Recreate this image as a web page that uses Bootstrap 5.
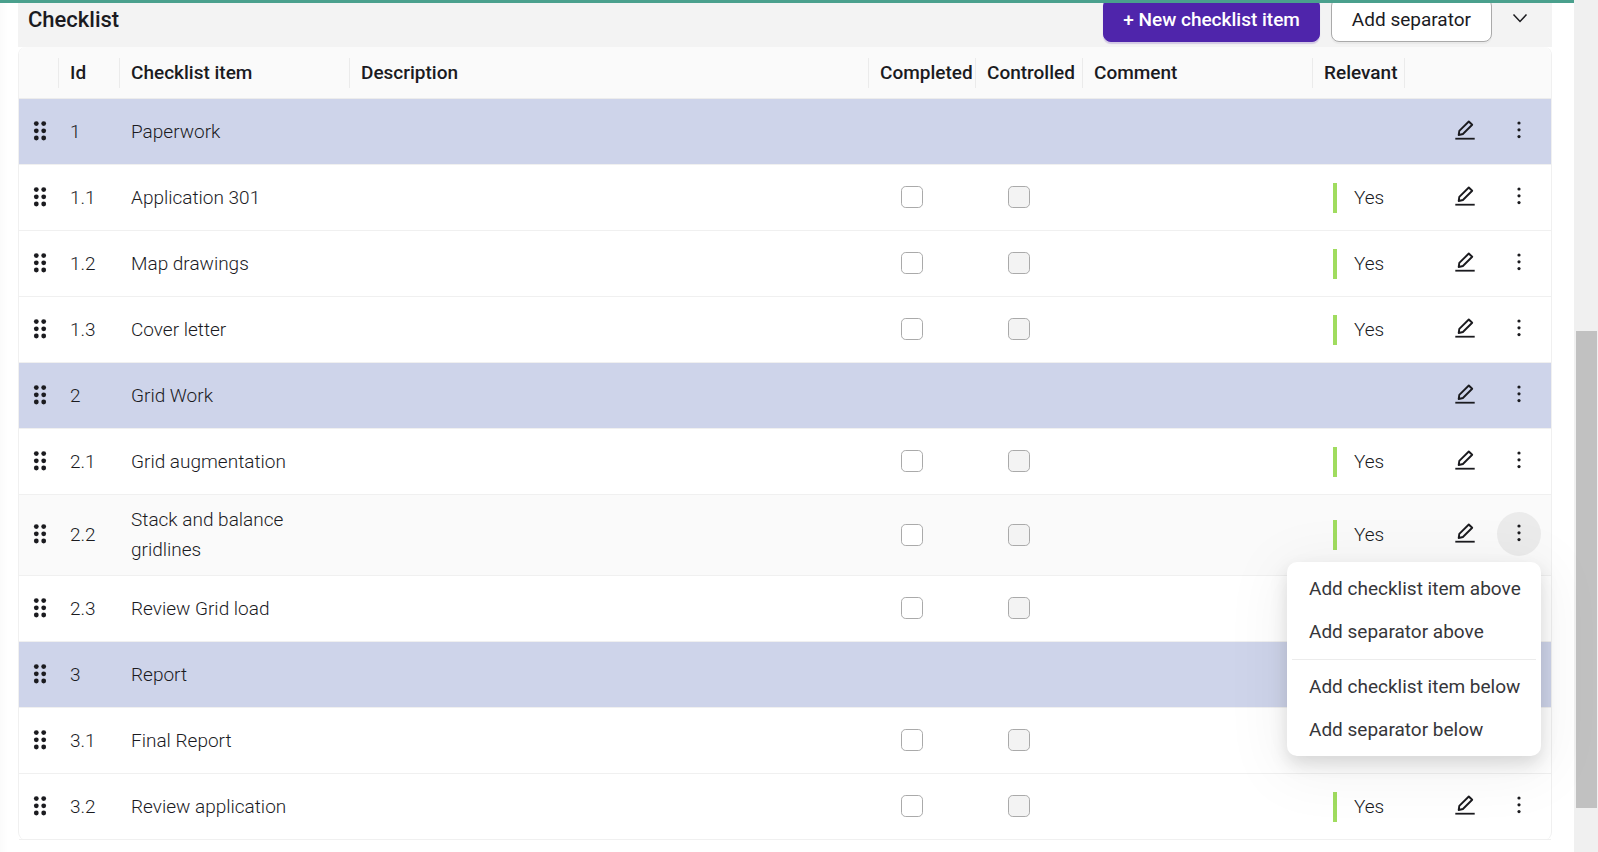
<!DOCTYPE html>
<html lang="en">
<head>
<meta charset="utf-8">
<meta name="viewport" content="width=device-width, initial-scale=1">
<title>Checklist</title>
<link rel="stylesheet" href="https://cdn.jsdelivr.net/npm/bootstrap@5.3.0/dist/css/bootstrap.min.css">
<style>
  body { font-family: Roboto, "Liberation Sans", sans-serif; font-size: 19px; line-height: 30px; color: #1b1b1f; background: #fff; }
  .top-line { height: 3px; background: #4aa08d; margin-right: 24px; }
  .page-main { padding: 0 22px 0 18px; background: linear-gradient(90deg, #fbfbfb, #fff 8px); }
  .panel-head { height: 47px; padding: 0 16px 7px 10px; gap: 11px; background: #f3f3f3; }
  .panel-head h2 { font-size: 22px; line-height: 30px; font-weight: 500; }
  .head-btn { height: 44px; padding: 0 20px; font-size: 19px; line-height: 30px; border-radius: 8px; white-space: nowrap; flex-shrink: 0; }
  .head-new { padding: 0 19px; background: #4f25ab; border-color: #4f25ab; color: #fff; font-weight: 500; box-shadow: 0 2px 1px #4f25ab33; }
  .head-new:hover { background: #43209a; color: #fff; }
  .head-sep { background: #fff; border-color: #aaa; color: #1b1b1f; box-shadow: 0 2px 1px #0000000a; }
  .head-fold { width: 33px; height: 44px; }
  .list-table { table-layout: fixed; border-collapse: separate; border-spacing: 0; border: solid #f0f0f0; border-width: 0 1px; border-radius: 8px; color: inherit; }
  .list-table th { height: 52px; padding: 0; background: #fafafa; border-bottom: 1px solid #ececec; font-weight: 500; vertical-align: middle; white-space: nowrap; }
  .list-table th:first-child { border-top-left-radius: 8px; }
  .list-table th:last-child { border-top-right-radius: 8px; }
  .th-label { height: 30px; line-height: 30px; padding-left: 11px; border-right: 1px solid #ebebeb; }
  .list-table th:last-child .th-label { border: 0; }
  .list-table td { height: 66px; padding: 10px 11px; border-bottom: 1px solid #f0f0f0; font-weight: 300; vertical-align: middle; }
  .list-table .item-name { padding-right: 50px; }
  .row-group td { background: #ced4ea; }
  .row-active td { background: #fafafa; }
  .c-grip { width: 40px } .c-id { width: 61px } .c-item { width: 230px } .c-check { width: 107px }
  .c-rel { width: 92px } .c-act { width: 146px }
  .list-table .tick-cell { padding: 10px 0 11px 32px; }
  .tick { display: block; width: 22px; height: 22px; margin: 0; border: 1px solid #aaa; border-radius: 6px; }
  .tick:disabled { background: #f3f3f3; opacity: 1; }
  .list-table .rel-cell { padding-left: 20px; padding-right: 0; }
  .yes-mark { height: 30px; padding-left: 17px; border-left: 4px solid #a0dc5f; }
  .list-table .grip-cell { padding: 0; }
  .list-table .act-cell { padding: 0 10px 2px 0; }
  .act-tools { gap: 10px; }
  .tool { width: 44px; height: 44px; padding: 0; border: 0; border-radius: 50%; background: none; color: #1b1b1f; display: flex; align-items: center; justify-content: center; }
  .tool.is-open { background: #ebebeb; }
  .grip { width: 41px; }
  .tool svg, .head-fold svg { display: block; }
  .row-menu { top: 50px; right: 0; width: 254px; padding: 5px; border: 0; border-radius: 10px; background: #fff; font-size: 19px; font-weight: 400; box-shadow: 0 8px 18px #00000021, 0 10px 60px 10px #0000000d; }
  .row-menu .dropdown-item { height: 43px; padding: 6px 17px; color: #36363a; line-height: 30px; font-weight: 400; }
  .row-menu .dropdown-divider { margin: 6px 0 5px; border-color: #ececec; opacity: 1; }
  .scroll-rail { width: 24px; background: #f0f0f0; padding: 0 1px 0 2px; }
  .rail-gap { flex: 331 0 0; }
  .rail-thumb { flex: 477 0 0; background: #c1c1c1; }
  .rail-rest { flex: 44 0 0; }
</style>
</head>
<body>
<svg class="d-none" aria-hidden="true">
  <symbol id="i-grip" viewBox="0 0 20 24"><g fill="currentColor"><circle cx="6.3" cy="3.6" r="2.4"/><circle cx="13.7" cy="3.6" r="2.4"/><circle cx="6.3" cy="10.8" r="2.4"/><circle cx="13.7" cy="10.8" r="2.4"/><circle cx="6.3" cy="18" r="2.4"/><circle cx="13.7" cy="18" r="2.4"/></g></symbol>
  <symbol id="i-edit" viewBox="0 0 20 24"><path d="M0.3 19.7H19.7" stroke="currentColor" stroke-width="1.8"/><path d="M13.8 2.5 17.2 5.8 7.9 15 3.7 16 4.3 11.9Z" fill="none" stroke="currentColor" stroke-width="1.9" stroke-linejoin="round"/></symbol>
  <symbol id="i-more" viewBox="0 0 20 24"><g fill="currentColor"><circle cx="10" cy="4" r="1.6"/><circle cx="10" cy="10.8" r="1.6"/><circle cx="10" cy="17.6" r="1.6"/></g></symbol>
</svg>
<div class="fixed-top top-line"></div>
<div class="d-flex min-vh-100">
  <main class="page-main flex-grow-1">
    <header class="panel-head d-flex align-items-center">
      <h2 class="m-0 me-auto">Checklist</h2>
      <button type="button" class="btn head-btn head-new">+ New checklist item</button>
      <button type="button" class="btn head-btn head-sep">Add separator</button>
      <button type="button" class="btn head-fold border-0 p-0 d-flex align-items-center justify-content-center" aria-label="Collapse"><svg width="16" height="14" viewBox="0 0 16 14"><path d="M1.5 1.5 8 8.5 14.5 1.5" fill="none" stroke="#1b1b1f" stroke-width="1.5"/></svg></button>
    </header>
    <table class="list-table w-100">
      <colgroup><col class="c-grip"><col class="c-id"><col class="c-item"><col><col class="c-check"><col class="c-check"><col class="c-item"><col class="c-rel"><col class="c-act"></colgroup>
      <thead><tr>
        <th><div class="th-label"></div></th><th><div class="th-label">Id</div></th><th><div class="th-label">Checklist item</div></th><th><div class="th-label">Description</div></th><th><div class="th-label">Completed</div></th><th><div class="th-label">Controlled</div></th><th><div class="th-label">Comment</div></th><th><div class="th-label">Relevant</div></th><th><div class="th-label"></div></th>
      </tr></thead>
      <tbody id="rows"></tbody>
    </table>
  </main>
  <div class="scroll-rail d-flex flex-column flex-shrink-0" aria-hidden="true"><div class="rail-gap"></div><div class="rail-thumb"></div><div class="rail-rest"></div></div>
</div>
<script>
  const items = [
    ['1', 'Paperwork', '', 'group'], ['1.1', 'Application 301', 'Yes'], ['1.2', 'Map drawings', 'Yes'], ['1.3', 'Cover letter', 'Yes'],
    ['2', 'Grid Work', '', 'group'], ['2.1', 'Grid augmentation', 'Yes'], ['2.2', 'Stack and balance gridlines', 'Yes', 'active'], ['2.3', 'Review Grid load', ''],
    ['3', 'Report', '', 'group'], ['3.1', 'Final Report', ''], ['3.2', 'Review application', 'Yes']
  ];
  const icon = name => `<svg width="20" height="24" aria-hidden="true"><use href="#i-${name}"/></svg>`;
  const menu = `<ul class="dropdown-menu row-menu show">
    <li><button type="button" class="dropdown-item">Add checklist item above</button></li>
    <li><button type="button" class="dropdown-item">Add separator above</button></li>
    <li><hr class="dropdown-divider"></li>
    <li><button type="button" class="dropdown-item">Add checklist item below</button></li>
    <li><button type="button" class="dropdown-item">Add separator below</button></li></ul>`;
  document.getElementById('rows').innerHTML = items.map(([id, name, relevant, kind]) => {
    const group = kind === 'group', active = kind === 'active';
    const tick = (what, off) => group ? '' : `<input type="checkbox" class="form-check-input tick" aria-label="${what} ${id}" ${off}>`;
    return `<tr class="${kind ? 'row-' + kind : ''}">
      <td class="grip-cell"><button type="button" class="tool grip" aria-label="Move ${id}">${icon('grip')}</button></td>
      <td>${id}</td><td class="item-name">${name}</td><td></td>
      <td class="tick-cell">${tick('Completed', '')}</td><td class="tick-cell">${tick('Controlled', 'disabled')}</td><td></td>
      <td class="rel-cell">${relevant ? `<div class="yes-mark">${relevant}</div>` : ''}</td>
      <td class="act-cell"><div class="act-tools d-flex justify-content-end">
        <button type="button" class="tool" aria-label="Edit ${id}">${icon('edit')}</button>
        <div class="position-relative"><button type="button" class="tool ${active ? 'is-open' : ''}" aria-label="More for ${id}">${icon('more')}</button>${active ? menu : ''}</div>
      </div></td></tr>`;
  }).join('');
</script>
<script src="https://cdn.jsdelivr.net/npm/bootstrap@5.3.0/dist/js/bootstrap.bundle.min.js"></script>
</body>
</html>
